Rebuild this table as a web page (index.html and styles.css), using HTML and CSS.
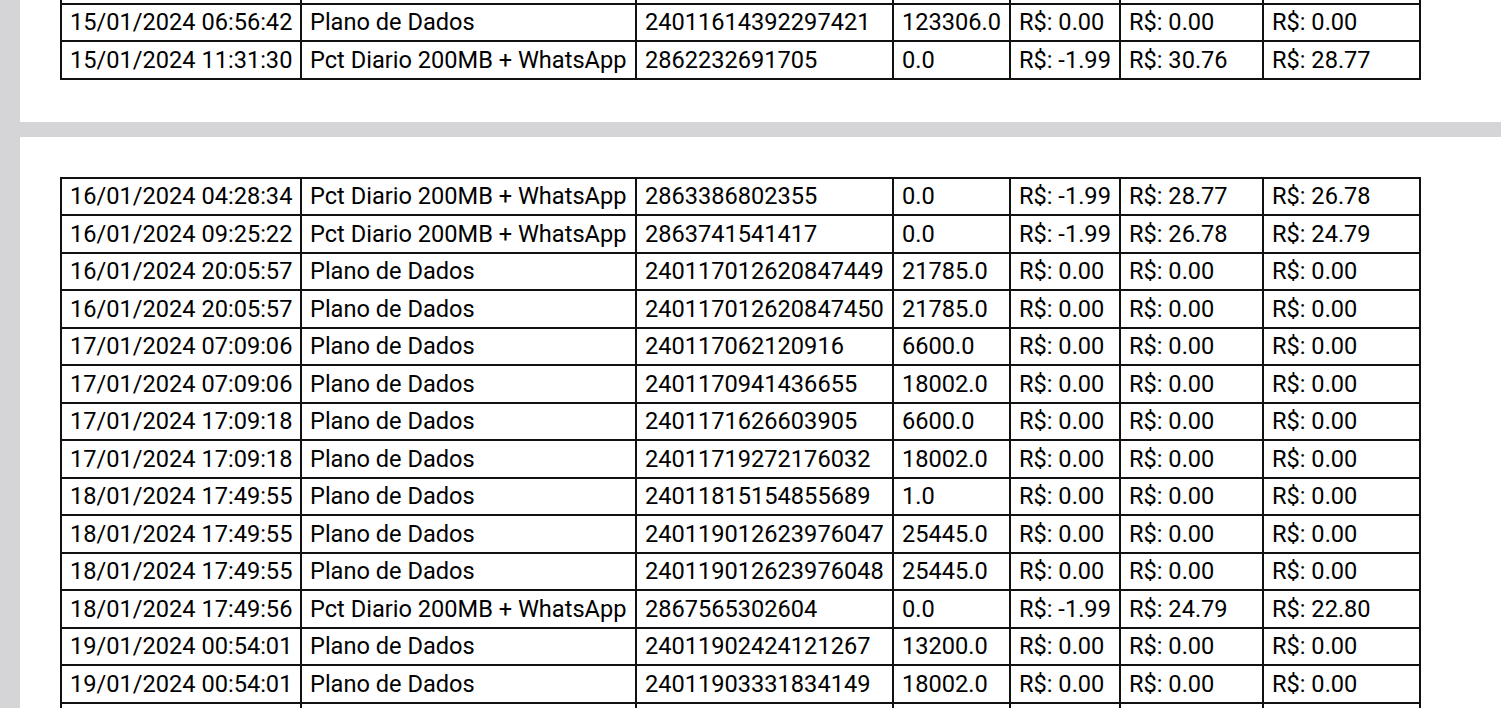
FILE: index.html
```html
<!DOCTYPE html>
<html lang="pt-BR">
<head>
<meta charset="utf-8">
<title>Extrato</title>
<link rel="stylesheet" href="styles.css">
</head>
<body>
<div class="viewer">
  <section class="page page-first">
    <table class="grid">
      <colgroup>
        <col class="c1"><col class="c2"><col class="c3"><col class="c4"><col class="c5"><col class="c6"><col class="c7">
      </colgroup>
      <tbody>
        <tr><td></td><td></td><td></td><td></td><td></td><td></td><td></td></tr>
        <tr><td>15/01/2024 06:56:42</td><td>Plano de Dados</td><td>24011614392297421</td><td>123306.0</td><td>R$: 0.00</td><td>R$: 0.00</td><td>R$: 0.00</td></tr>
        <tr><td>15/01/2024 11:31:30</td><td>Pct Diario 200MB + WhatsApp</td><td>2862232691705</td><td>0.0</td><td>R$: -1.99</td><td>R$: 30.76</td><td>R$: 28.77</td></tr>
      </tbody>
    </table>
  </section>
  <section class="page">
    <table class="grid">
      <colgroup>
        <col class="c1"><col class="c2"><col class="c3"><col class="c4"><col class="c5"><col class="c6"><col class="c7">
      </colgroup>
      <tbody>
        <tr><td>16/01/2024 04:28:34</td><td>Pct Diario 200MB + WhatsApp</td><td>2863386802355</td><td>0.0</td><td>R$: -1.99</td><td>R$: 28.77</td><td>R$: 26.78</td></tr>
        <tr><td>16/01/2024 09:25:22</td><td>Pct Diario 200MB + WhatsApp</td><td>2863741541417</td><td>0.0</td><td>R$: -1.99</td><td>R$: 26.78</td><td>R$: 24.79</td></tr>
        <tr><td>16/01/2024 20:05:57</td><td>Plano de Dados</td><td>240117012620847449</td><td>21785.0</td><td>R$: 0.00</td><td>R$: 0.00</td><td>R$: 0.00</td></tr>
        <tr><td>16/01/2024 20:05:57</td><td>Plano de Dados</td><td>240117012620847450</td><td>21785.0</td><td>R$: 0.00</td><td>R$: 0.00</td><td>R$: 0.00</td></tr>
        <tr><td>17/01/2024 07:09:06</td><td>Plano de Dados</td><td>240117062120916</td><td>6600.0</td><td>R$: 0.00</td><td>R$: 0.00</td><td>R$: 0.00</td></tr>
        <tr><td>17/01/2024 07:09:06</td><td>Plano de Dados</td><td>2401170941436655</td><td>18002.0</td><td>R$: 0.00</td><td>R$: 0.00</td><td>R$: 0.00</td></tr>
        <tr><td>17/01/2024 17:09:18</td><td>Plano de Dados</td><td>2401171626603905</td><td>6600.0</td><td>R$: 0.00</td><td>R$: 0.00</td><td>R$: 0.00</td></tr>
        <tr><td>17/01/2024 17:09:18</td><td>Plano de Dados</td><td>24011719272176032</td><td>18002.0</td><td>R$: 0.00</td><td>R$: 0.00</td><td>R$: 0.00</td></tr>
        <tr><td>18/01/2024 17:49:55</td><td>Plano de Dados</td><td>24011815154855689</td><td>1.0</td><td>R$: 0.00</td><td>R$: 0.00</td><td>R$: 0.00</td></tr>
        <tr><td>18/01/2024 17:49:55</td><td>Plano de Dados</td><td>240119012623976047</td><td>25445.0</td><td>R$: 0.00</td><td>R$: 0.00</td><td>R$: 0.00</td></tr>
        <tr><td>18/01/2024 17:49:55</td><td>Plano de Dados</td><td>240119012623976048</td><td>25445.0</td><td>R$: 0.00</td><td>R$: 0.00</td><td>R$: 0.00</td></tr>
        <tr><td>18/01/2024 17:49:56</td><td>Pct Diario 200MB + WhatsApp</td><td>2867565302604</td><td>0.0</td><td>R$: -1.99</td><td>R$: 24.79</td><td>R$: 22.80</td></tr>
        <tr><td>19/01/2024 00:54:01</td><td>Plano de Dados</td><td>24011902424121267</td><td>13200.0</td><td>R$: 0.00</td><td>R$: 0.00</td><td>R$: 0.00</td></tr>
        <tr><td>19/01/2024 00:54:01</td><td>Plano de Dados</td><td>24011903331834149</td><td>18002.0</td><td>R$: 0.00</td><td>R$: 0.00</td><td>R$: 0.00</td></tr>
        <tr><td></td><td></td><td></td><td></td><td></td><td></td><td></td></tr>
      </tbody>
    </table>
  </section>
</div>
</body>
</html>
```
FILE: styles.css
```css
html, body {
  margin: 0;
  padding: 0;
  height: 100%;
  overflow: hidden;
  background: #d5d5d7;
}

.viewer {
  display: flex;
  flex-direction: column;
  gap: 15px;
  padding-left: 20px;
}

.page {
  background: #ffffff;
  width: 1600px;
  padding: 40px 0 42px 40px;
  box-sizing: border-box;
}

.page-first {
  margin-top: -75px;
}

.grid {
  border-collapse: collapse;
  table-layout: fixed;
  width: 1359px;
  font-family: Roboto, "Liberation Sans", sans-serif;
  font-size: 23.6px;
  color: #000;
}

.grid td {
  border: 2px solid #111;
  height: 37.5px;
  padding: 0 7px 0 8px;
  box-sizing: border-box;
  white-space: nowrap;
  overflow: hidden;
  line-height: 26px;
  vertical-align: middle;
}

.c1 { width: 240px; }
.c2 { width: 335px; }
.c3 { width: 257px; }
.c4 { width: 117px; }
.c5 { width: 110px; }
.c6 { width: 143px; }
.c7 { width: 157px; }
```
